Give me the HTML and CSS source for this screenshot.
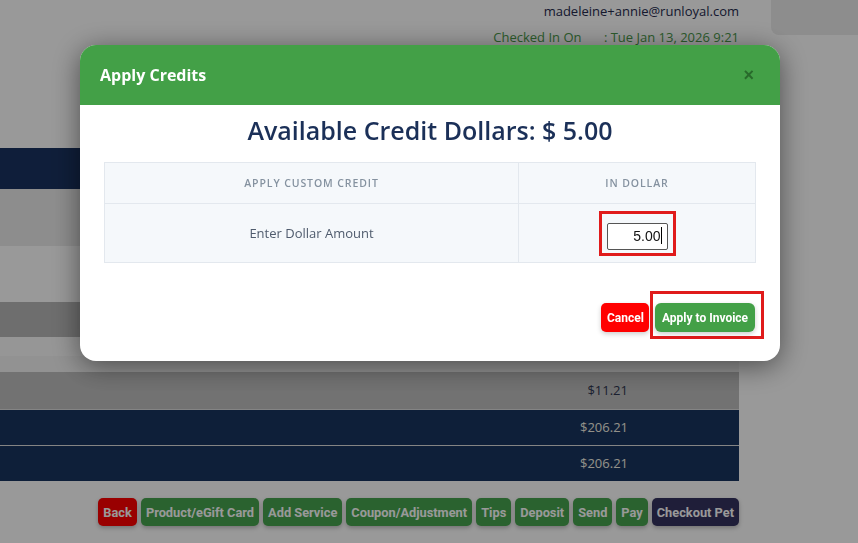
FILE: index.html
```html
<!DOCTYPE html>
<html>
<head>
  <title>Checkout - Apply Credits</title>
  <link rel="stylesheet" href="styles.css">
</head>
<body>
  <div class="page">
    <div class="topbar">
      <div class="user-info">
        <div class="email">madeleine+annie@runloyal.com</div>
        <div class="checked">
          <span class="checked-label">Checked In On</span>
          <span class="checked-sep">:</span>
          <span>Tue Jan 13, 2026 9:21</span>
        </div>
      </div>
      <div class="corner-box"></div>
    </div>

    <div class="band band-navy"></div>
    <div class="band band-light"></div>
    <div class="band band-white"></div>
    <div class="band band-gray"></div>
    <div class="band band-thin"></div>
    <div class="band band-thin2"></div>

    <div class="totals">
      <div class="total-row subtotal">$11.21</div>
      <div class="total-row grand">$206.21</div>
      <div class="total-row grand">$206.21</div>
    </div>

    <div class="actions">
      <button class="btn btn-red">Back</button>
      <button class="btn btn-green">Product/eGift Card</button>
      <button class="btn btn-green">Add Service</button>
      <button class="btn btn-green">Coupon/Adjustment</button>
      <button class="btn btn-green">Tips</button>
      <button class="btn btn-green">Deposit</button>
      <button class="btn btn-green">Send</button>
      <button class="btn btn-green">Pay</button>
      <button class="btn btn-dark">Checkout Pet</button>
    </div>
  </div>

  <div class="backdrop"></div>

  <div class="modal">
    <div class="modal-header">
      <h4>Apply Credits</h4>
      <span class="close">&times;</span>
    </div>
    <div class="modal-body">
      <h2 class="available">Available Credit Dollars: $ 5.00</h2>
      <table class="credit-table">
        <tr>
          <th class="col-name">Apply Custom Credit</th>
          <th>In Dollar</th>
        </tr>
        <tr>
          <td>Enter Dollar Amount</td>
          <td>
            <span class="highlight input-mark">
              <span class="amount-input">5.00<span class="caret"></span></span>
            </span>
          </td>
        </tr>
      </table>
    </div>
    <div class="modal-footer">
      <button class="mbtn mbtn-cancel">Cancel</button>
      <span class="highlight apply-mark">
        <button class="mbtn mbtn-apply">Apply to Invoice</button>
      </span>
    </div>
  </div>
</body>
</html>
```

FILE: styles.css
```css
body {
  margin: 0;
  font-family: "Open Sans", Arial, sans-serif;
  background: #fff;
  overflow: hidden;
}
.page {
  width: 858px;
  height: 543px;
}
.topbar {
  display: flex;
  height: 148px;
}
.user-info {
  width: 739px;
  text-align: right;
  padding-top: 2px;
}
.email {
  font-size: 13px;
  line-height: 18px;
  color: #252a4e;
}
.checked {
  margin-top: 8px;
  font-size: 13px;
  line-height: 18px;
  color: #4a994a;
}
.checked-label {
  margin-right: 19px;
}
.corner-box {
  margin-left: 32px;
  width: 87px;
  height: 35px;
  background: #ececec;
  border-bottom-left-radius: 8px;
}
.band {
  width: 739px;
}
.band-navy {
  height: 41px;
  background: #1a3361;
}
.band-light {
  height: 57px;
  background: #ececec;
}
.band-white {
  height: 56px;
  background: #fff;
}
.band-gray {
  height: 35px;
  background: #b8b8b8;
}
.band-thin {
  height: 19px;
  background: #fafafa;
}
.band-thin2 {
  height: 16px;
  background: #f3f3f3;
}
.totals {
  width: 739px;
}
.total-row {
  text-align: right;
  padding-right: 111px;
  font-size: 13px;
  border-bottom: 1px solid #dcdcdc;
}
.subtotal {
  height: 37px;
  line-height: 37px;
  background: #bfbfbf;
  color: #2d3550;
}
.grand {
  height: 35px;
  line-height: 35px;
  background: #18345f;
  color: #f4f1e4;
}
.grand:last-child {
  border-bottom: none;
}
.actions {
  width: 739px;
  margin-top: 17px;
  display: flex;
  justify-content: flex-end;
  gap: 4px;
}
.btn {
  height: 28px;
  padding: 0 5px;
  border: none;
  border-radius: 5px;
  font-family: Roboto, Arial, sans-serif;
  font-weight: bold;
  font-size: 12.8px;
  color: #fff;
  box-shadow: 0 2px 4px rgba(0, 0, 0, 0.25);
}
.btn-red {
  background: #ff0000;
}
.btn-green {
  background: #47a44f;
}
.btn-dark {
  background: #35325f;
}
.backdrop {
  position: fixed;
  inset: 0;
  background: rgba(0, 0, 0, 0.4);
}
.modal {
  position: fixed;
  top: 45px;
  left: 80px;
  width: 700px;
  height: 316px;
  background: #fff;
  border-radius: 16px;
  overflow: hidden;
  box-shadow: 0 5px 28px rgba(0, 0, 0, 0.5);
}
.modal-header {
  height: 60px;
  background: #43a047;
  display: flex;
  align-items: center;
  justify-content: space-between;
  padding: 0 26px 0 20px;
}
.modal-header h4 {
  margin: 0;
  font-size: 16px;
  font-weight: 700;
  color: #fff;
}
.close {
  font-family: Arial, sans-serif;
  font-size: 18px;
  font-weight: bold;
  color: #286a2b;
}
.modal-body {
  padding: 0 24px;
}
.available {
  margin: 0;
  height: 57px;
  font-size: 25px;
  font-weight: 600;
  line-height: 50px;
  color: #1b3058;
  text-align: center;
}
.credit-table {
  width: 100%;
  border-collapse: collapse;
  background: #f5f8fb;
}
.credit-table th,
.credit-table td {
  border: 1px solid #e3e8ee;
  text-align: center;
  padding: 0;
}
.credit-table th {
  height: 40px;
  font-size: 10.5px;
  font-weight: 600;
  letter-spacing: 0.9px;
  text-transform: uppercase;
  color: #8592a0;
}
.credit-table .col-name {
  width: 413px;
}
.credit-table td {
  height: 58px;
  font-size: 13px;
  color: #4f5b6d;
}
.highlight {
  display: inline-block;
  border: 3px solid #e01b1b;
}
.input-mark {
  padding: 9px 5px 3px;
  vertical-align: middle;
}
.amount-input {
  display: block;
  width: 54px;
  height: 25px;
  padding-right: 5px;
  border: 1px solid #555;
  border-radius: 2px;
  background: #fff;
  font-family: "Liberation Sans", Arial, sans-serif;
  font-size: 14px;
  line-height: 25px;
  color: #111;
  text-align: right;
}
.caret {
  display: inline-block;
  width: 1px;
  height: 17px;
  background: #000;
  vertical-align: -3px;
}
.modal-footer {
  display: flex;
  justify-content: flex-end;
  align-items: flex-end;
  padding: 28px 16px 0 0;
}
.mbtn {
  height: 29px;
  border: none;
  font-family: Roboto, Arial, sans-serif;
  font-weight: bold;
  font-size: 12px;
  color: #fff;
  box-shadow: 0 2px 5px rgba(0, 0, 0, 0.2);
}
.mbtn-cancel {
  width: 48px;
  margin-right: 1px;
  margin-bottom: 7px;
  border-radius: 5px;
  background: #ff0000;
}
.apply-mark {
  padding: 9px 6px 4px 2px;
}
.mbtn-apply {
  display: block;
  width: 100px;
  border-radius: 6px;
  background: #43a047;
}
```
